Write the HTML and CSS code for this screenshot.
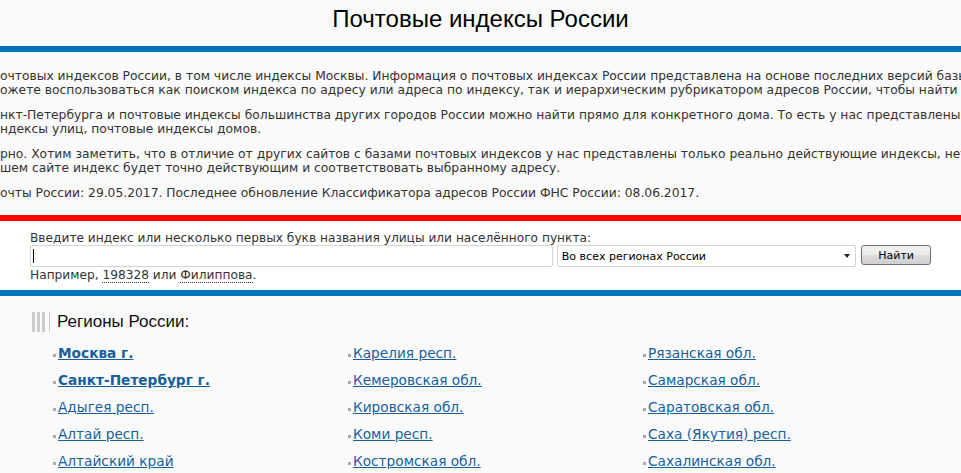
FILE: index.html
```html
<!DOCTYPE html>
<html lang="ru">
<head>
<meta charset="utf-8">
<title>Почтовые индексы России</title>
<link rel="stylesheet" href="styles.css">
</head>
<body>
<header class="top">
  <h1 class="title">Почтовые индексы России</h1>
</header>
<div class="bar bar-blue"></div>
<section class="intro">
  <div class="intro-inner">
    <p><span class="cut">На нашем сайте собрана база п</span>очтовых индексов России, в том числе индексы Москвы. Информация о почтовых индексах России представлена на основе последних версий базы данных<br><span class="cut">Почты России и ФНС России. Вы м</span>ожете воспользоваться как поиском индекса по адресу или адреса по индексу, так и иерархическим рубрикатором адресов России, чтобы найти нужный индекс.</p>
    <p><span class="cut">Почтовые индексы Москвы, Са</span>нкт-Петербурга и почтовые индексы большинства других городов России можно найти прямо для конкретного дома. То есть у нас представлены почтовые индексы городов,<br><span class="cut">почтовые и</span>ндексы улиц, почтовые индексы домов.</p>
    <p><span class="cut">База обновляется регулярно и достове</span>рно. Хотим заметить, что в отличие от других сайтов с базами почтовых индексов у нас представлены только реально действующие индексы, нет устаревших, поэтому<br><span class="cut">найденный на на</span>шем сайте индекс будет точно действующим и соответствовать выбранному адресу.</p>
    <p><span class="cut">Последнее обновление базы данных П</span>очты России: 29.05.2017. Последнее обновление Классификатора адресов России ФНС России: 08.06.2017.</p>
  </div>
</section>
<div class="bar bar-red"></div>
<section class="search">
  <label class="search-label" for="q">Введите индекс или несколько первых букв названия улицы или населённого пункта:</label>
  <form class="search-row">
    <div class="field"><input class="search-input" id="q" type="text"></div>
    <div class="select-wrap">
      <select class="search-select">
        <option>Во всех регионах России</option>
      </select>
    </div>
    <button class="search-btn" type="button">Найти</button>
  </form>
  <div class="example">Например, <a class="ex-link" href="#">198328</a> или <a class="ex-link" href="#">Филиппова</a>.</div>
</section>
<div class="bar bar-blue"></div>
<section class="regions">
  <h2 class="regions-title"><span class="bars"><i></i><i></i><i></i><i class="thin"></i></span>Регионы России:</h2>
  <div class="region-grid">
    <ul class="region-col">
      <li><a class="major" href="#">Москва г.</a></li>
      <li><a class="major" href="#">Санкт-Петербург г.</a></li>
      <li><a href="#">Адыгея респ.</a></li>
      <li><a href="#">Алтай респ.</a></li>
      <li><a href="#">Алтайский край</a></li>
    </ul>
    <ul class="region-col">
      <li><a href="#">Карелия респ.</a></li>
      <li><a href="#">Кемеровская обл.</a></li>
      <li><a href="#">Кировская обл.</a></li>
      <li><a href="#">Коми респ.</a></li>
      <li><a href="#">Костромская обл.</a></li>
    </ul>
    <ul class="region-col">
      <li><a href="#">Рязанская обл.</a></li>
      <li><a href="#">Самарская обл.</a></li>
      <li><a href="#">Саратовская обл.</a></li>
      <li><a href="#">Саха (Якутия) респ.</a></li>
      <li><a href="#">Сахалинская обл.</a></li>
    </ul>
  </div>
</section>
</body>
</html>
```
FILE: styles.css
```css
html, body {
  margin: 0;
  padding: 0;
  overflow: hidden;
}
body {
  background: #fafafa;
  font-family: "DejaVu Sans", Verdana, sans-serif;
  font-size: 12px;
  color: #333;
}
.top {
  height: 46px;
  display: flex;
  justify-content: center;
}
.title {
  margin: 0;
  padding-top: 5px;
  font-family: "Liberation Sans", Arial, sans-serif;
  font-weight: normal;
  font-size: 24px;
  line-height: 28px;
  color: #000;
}
.bar {
  height: 6px;
}
.bar-blue { background: #0073be; }
.bar-red { background: #ff0000; }

.intro {
  overflow: hidden;
  padding: 17px 0 15px;
}
.intro-inner {
  margin-left: -500px;
  white-space: nowrap;
  font-size: 12.3px;
}
.intro p {
  margin: 0 0 11px;
  line-height: 14px;
}
.intro p:last-child {
  margin-bottom: 0;
}
.cut {
  display: inline-block;
  width: 500px;
  text-align: right;
}

.search {
  background: #fff;
  padding: 10px 30px 8px;
}
.search-label {
  display: block;
  line-height: 14px;
  font-size: 12.2px;
}
.search-row {
  display: flex;
  align-items: flex-start;
  margin: 0;
  height: 22px;
}
.field {
  position: relative;
  width: 524px;
  margin-right: 4px;
}
.field::after {
  content: "";
  position: absolute;
  left: 3px;
  top: 4px;
  width: 1px;
  height: 14px;
  background: #000;
}
.search-input {
  box-sizing: border-box;
  width: 100%;
  height: 22px;
  border: 1px solid #d4d4d4;
  border-radius: 2px;
  background: #fff;
  padding: 0 3px;
  outline: none;
}
.select-wrap {
  position: relative;
  width: 300px;
  margin-right: 5px;
}
.select-wrap::after {
  content: "";
  position: absolute;
  right: 6px;
  top: 9px;
  border-left: 3px solid transparent;
  border-right: 3px solid transparent;
  border-top: 4px solid #222;
}
.search-select {
  appearance: none;
  -webkit-appearance: none;
  box-sizing: border-box;
  width: 100%;
  height: 22px;
  border: 1px solid #d4d4d4;
  border-radius: 2px;
  background: #fff;
  padding: 0 4px;
  font-family: "DejaVu Sans", Tahoma, sans-serif;
  font-size: 11px;
  color: #000;
}
.search-btn {
  box-sizing: border-box;
  width: 70px;
  height: 20px;
  border: 1px solid #707070;
  border-radius: 3px;
  background: linear-gradient(#f2f2f2 0%, #ebebeb 50%, #dddddd 51%, #cfcfcf 100%);
  font-family: "DejaVu Sans", Tahoma, sans-serif;
  font-size: 11px;
  color: #000;
  padding: 0;
}
.example {
  line-height: 14px;
  margin-top: 1px;
  font-size: 12.2px;
}
.ex-link {
  color: #333;
  text-decoration: none;
  border-bottom: 1px dotted #333;
}

.regions {
  padding: 16px 0 0 32px;
}
.regions-title {
  display: flex;
  align-items: center;
  margin: 0;
  height: 20px;
  font-family: "Liberation Sans", Arial, sans-serif;
  font-weight: normal;
  font-size: 17px;
  color: #111;
}
.bars {
  display: flex;
  height: 20px;
  margin-right: 7px;
}
.bars i {
  width: 3px;
  height: 20px;
  background: #cccccc;
  margin-right: 2px;
}
.bars i.thin {
  width: 1px;
  margin-left: 2px;
  margin-right: 0;
}
.region-grid {
  display: grid;
  grid-template-columns: repeat(3, 295px);
  margin: 8px 0 0 21px;
}
.region-col {
  list-style: none;
  margin: 0;
  padding: 0;
}
.region-col li {
  line-height: 27px;
  font-size: 13.7px;
}
.region-col li::before {
  content: "";
  display: inline-block;
  width: 3px;
  height: 3px;
  background: #aaa;
  margin-right: 2px;
  vertical-align: 1px;
}
.region-col a {
  color: #175f9c;
}
.region-col a.major {
  font-weight: bold;
}
```
